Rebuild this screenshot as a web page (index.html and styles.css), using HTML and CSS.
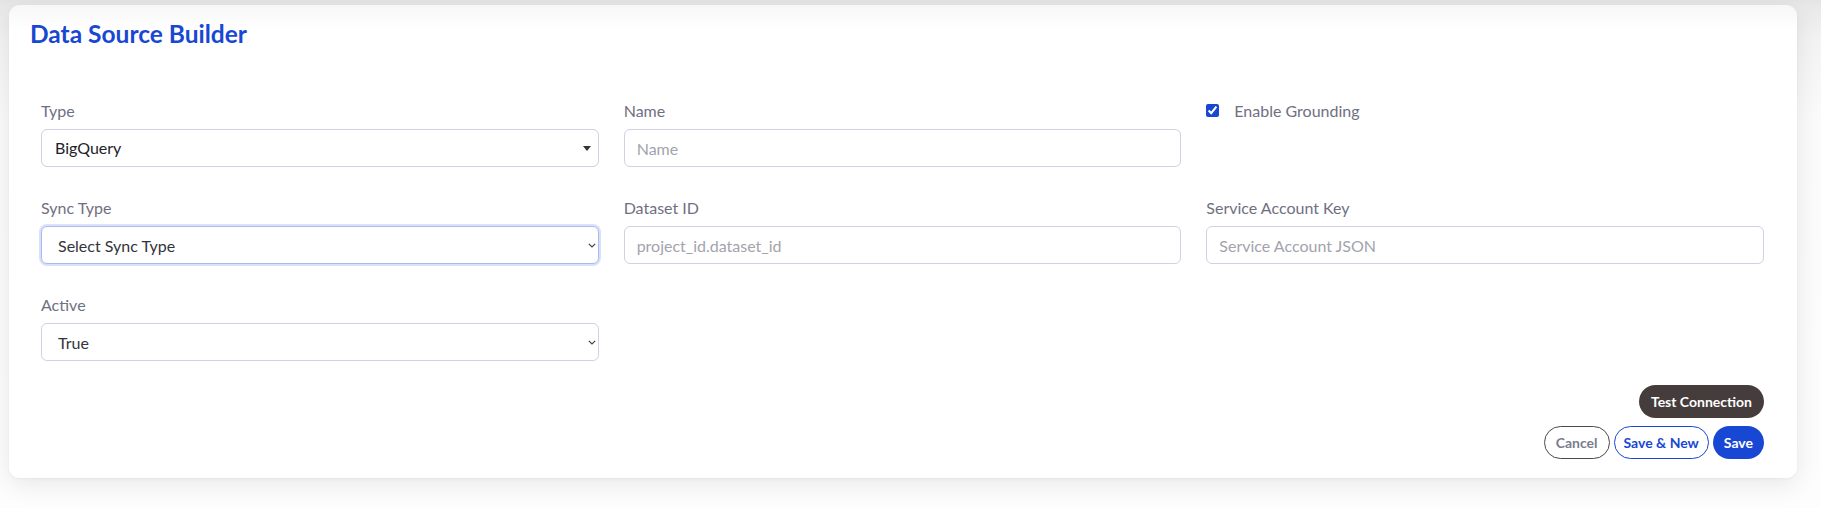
FILE: index.html
```html
<!DOCTYPE html>
<html lang="en">
<head>
<meta charset="utf-8">
<title>Data Source Builder</title>
<link rel="stylesheet" href="styles.css">
</head>
<body>
<div class="page">
  <section class="card">
    <h1 class="title">Data Source Builder</h1>
    <div class="form">
      <div class="grid">
        <div class="field">
          <label class="label">Type</label>
          <div class="control-wrap">
            <div class="control combo">BigQuery</div>
            <svg class="icon caret" width="8" height="5" viewBox="0 0 8 5"><path d="M0 0h8L4 5z" fill="#333"/></svg>
          </div>
        </div>
        <div class="field">
          <label class="label">Name</label>
          <input class="control input" type="text" placeholder="Name">
        </div>
        <div class="field">
          <label class="check"><input class="checkbox" type="checkbox" checked><span>Enable Grounding</span></label>
        </div>

        <div class="field">
          <label class="label">Sync Type</label>
          <div class="control-wrap">
            <select class="control select focused"><option>Select Sync Type</option></select>
            <svg class="icon chevron" width="8" height="5" viewBox="0 0 8 5"><path d="M0.8 0.8L4 4l3.2-3.2" fill="none" stroke="#444" stroke-width="1.2"/></svg>
          </div>
        </div>
        <div class="field">
          <label class="label">Dataset ID</label>
          <input class="control input" type="text" placeholder="project_id.dataset_id">
        </div>
        <div class="field">
          <label class="label">Service Account Key</label>
          <input class="control input" type="text" placeholder="Service Account JSON">
        </div>

        <div class="field">
          <label class="label">Active</label>
          <div class="control-wrap">
            <select class="control select"><option>True</option></select>
            <svg class="icon chevron" width="8" height="5" viewBox="0 0 8 5"><path d="M0.8 0.8L4 4l3.2-3.2" fill="none" stroke="#444" stroke-width="1.2"/></svg>
          </div>
        </div>
      </div>

      <div class="actions">
        <button class="btn btn-dark" type="button">Test Connection</button>
        <div class="btn-row">
          <button class="btn btn-cancel" type="button">Cancel</button>
          <button class="btn btn-outline" type="button">Save &amp; New</button>
          <button class="btn btn-primary" type="button">Save</button>
        </div>
      </div>
    </div>
  </section>
</div>
</body>
</html>
```

FILE: styles.css
```css
* { box-sizing: border-box; }

html, body {
  margin: 0;
  padding: 0;
  background: #ffffff;
}

body {
  font-family: Lato, "Open Sans", "Liberation Sans", sans-serif;
  background: linear-gradient(to bottom, #e4e4e4 0, #e8e8e8 5px, #f3f3f3 40px, #fbfbfb 120px, #fdfdfd 100%);
  height: 508px;
  overflow: hidden;
}

.page {
  padding: 5px 24px 30px 9px;
}

.card {
  background: linear-gradient(to bottom, #f7f7f7 0, #ffffff 26px);
  border-radius: 11px;
  box-shadow: 0 6px 26px rgba(0, 0, 0, 0.09), 0 1px 3px rgba(0, 0, 0, 0.04);
  padding: 14px 33px 19px 32px;
}

.title {
  margin: 0 0 0 -11px;
  font-size: 24.5px;
  line-height: 30px;
  font-weight: 700;
  color: #1847d4;
  letter-spacing: 0;
}

.form {
  margin-top: 52px;
}

.grid {
  display: grid;
  grid-template-columns: repeat(3, 1fr);
  column-gap: 25px;
  row-gap: 31px;
}

.field {
  display: flex;
  flex-direction: column;
}

.label {
  font-size: 16px;
  line-height: 20px;
  color: #6f6f82;
  margin-bottom: 8px;
}

.control-wrap {
  position: relative;
}

.control {
  display: block;
  width: 100%;
  height: 38px;
  border: 1px solid #d2d0e2;
  border-radius: 6px;
  background: #ffffff;
  font-family: Lato, "Open Sans", "Liberation Sans", sans-serif;
  font-size: 16px;
  color: #2b2b33;
  outline: none;
}

.combo {
  padding: 0 13px;
  line-height: 36px;
  color: #222228;
}

.input {
  padding: 0 12px;
}

.input::placeholder {
  color: #a3a3ad;
}

.select {
  appearance: none;
  -webkit-appearance: none;
  padding: 0 30px 0 16px;
  color: #34343c;
}

.select.focused {
  border-color: #a9bbf2;
  box-shadow: 0 0 0 2px rgba(24, 71, 212, 0.16);
}

.icon {
  position: absolute;
  top: 50%;
  pointer-events: none;
}

.caret {
  right: 8px;
  margin-top: -2px;
}

.chevron {
  right: 3px;
  margin-top: -2px;
}

.check {
  display: flex;
  align-items: center;
  height: 20px;
  margin-top: -1px;
  font-size: 16px;
  color: #6f6f82;
}

.checkbox {
  margin: 0 15px 0 0;
  width: 13px;
  height: 13px;
  accent-color: #1847d4;
}

.actions {
  margin-top: 24px;
  display: flex;
  flex-direction: column;
  align-items: flex-end;
  gap: 8px;
}

.btn-row {
  display: flex;
  gap: 4px;
}

.btn {
  height: 33px;
  padding: 0 10px;
  border: 1px solid transparent;
  border-radius: 17px;
  font-family: Lato, "Open Sans", "Liberation Sans", sans-serif;
  font-size: 14px;
  font-weight: 700;
  line-height: 31px;
  cursor: pointer;
  white-space: nowrap;
}

.btn-dark {
  background: #453d3c;
  color: #ffffff;
  padding: 0 11px;
}

.btn-cancel {
  background: #ffffff;
  border-color: #4a4a4a;
  color: #7b7b8e;
  padding: 0 11px;
}

.btn-outline {
  background: #ffffff;
  border-color: #1847d4;
  color: #1847d4;
  padding: 0 9px;
}

.btn-primary {
  background: #1847d4;
  color: #ffffff;
}
```
